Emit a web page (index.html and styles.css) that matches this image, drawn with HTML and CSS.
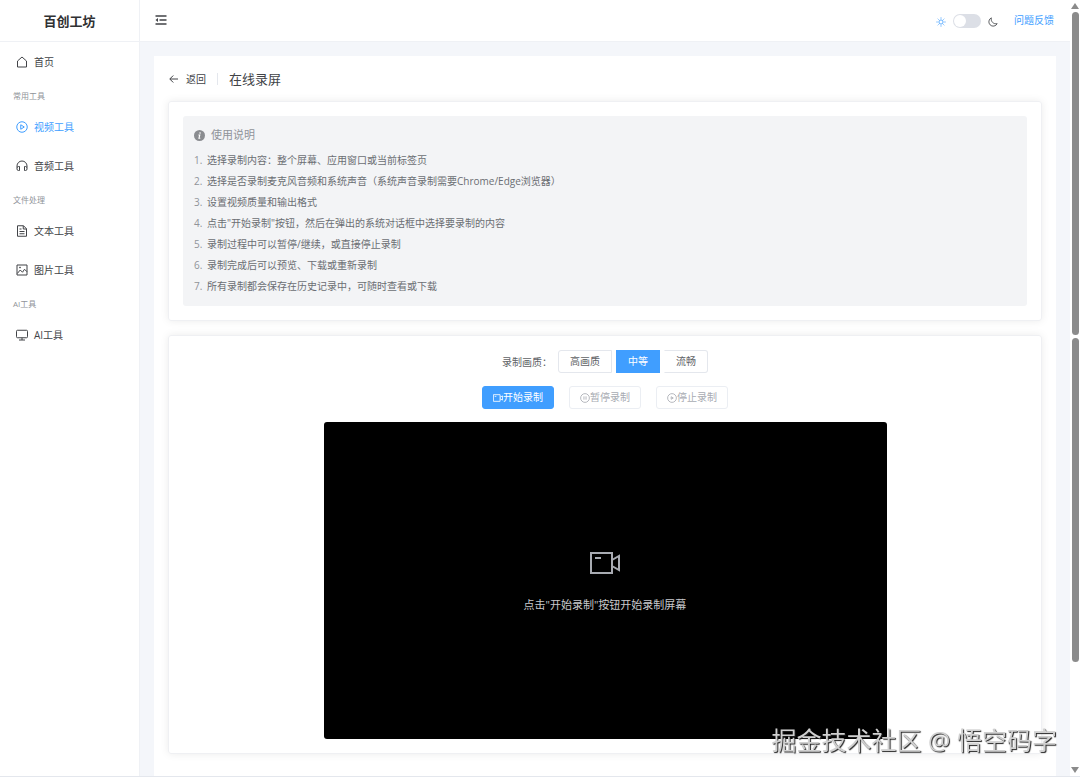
FILE: index.html
```
<!DOCTYPE html>
<html lang="zh-CN">
<head>
  <meta charset="UTF-8">
  <title>在线录屏 - 百创工坊</title>
  <meta name="viewport" content="width=device-width,initial-scale=1">
  <link rel="stylesheet" href="styles.css">
</head>
<body>
  <aside class="sidebar">
    <h1 class="logo">百创工坊</h1>
    <nav class="menu">
      <a class="menu-item" href="#">
        <svg class="icon" viewBox="0 0 24 24"><path d="M3 22V10l9-8 9 8v12z"/></svg>
        首页
      </a>
      <div class="menu-group">常用工具</div>
      <a class="menu-item active" href="#">
        <svg class="icon" viewBox="0 0 24 24"><circle cx="12" cy="12" r="10.5"/><path d="M9.500 7.500v9l7-4.500z"/></svg>
        视频工具
      </a>
      <a class="menu-item" href="#">
        <svg class="icon" viewBox="0 0 24 24"><path d="M2 15v-3a10 10 0 0 1 20 0v3M7 13v8H5a3 3 0 0 1-3-3v-2a3 3 0 0 1 3-3zM17 13v8h2a3 3 0 0 0 3-3v-2a3 3 0 0 0-3-3z"/></svg>
        音频工具
      </a>
      <div class="menu-group">文件处理</div>
      <a class="menu-item" href="#">
        <svg class="icon" viewBox="0 0 24 24"><path d="M3 1.500h12l6 6v15H3zM14.500 1.500V8H21M7 8h4M7 13h10M7 17.500h10"/></svg>
        文本工具
      </a>
      <a class="menu-item" href="#">
        <svg class="icon" viewBox="0 0 24 24"><path d="M2 2h20v20H2zM2.500 19l6-7 4.500 4.500 4-6 5 5"/><circle cx="8" cy="7" r="1"/></svg>
        图片工具
      </a>
      <div class="menu-group">AI工具</div>
      <a class="menu-item" href="#">
        <svg class="icon" viewBox="0 0 24 24"><rect x="1" y="2.500" width="22" height="15" rx="2"/><path d="M12 17.500V22M6 22h12"/></svg>
        AI工具
      </a>
    </nav>
  </aside>

  <div class="container">
    <header class="topbar">
      <button class="icon-btn" type="button" aria-label="折叠菜单">
        <svg class="icon" viewBox="0 0 24 24"><path class="bold" d="M1 4h22M9 12h14M1 20h22"/><path class="solid" d="M1 12l5-4v8z"/></svg>
      </button>
      <div class="topbar-right">
        <label class="theme">
          <svg class="icon sun" viewBox="0 0 24 24"><circle cx="12" cy="12" r="5"/><path d="M12 1v3M12 20v3M1 12h3M20 12h3M4.200 4.200l2 2M17.800 17.800l2 2M4.200 19.800l2-2M17.800 6.200l2-2"/></svg>
          <input class="switch" type="checkbox" aria-label="深色模式">
          <svg class="icon moon" viewBox="0 0 24 24"><path d="M8 2a10.500 10.500 0 1 0 14 14A11.500 11.500 0 0 1 8 2z"/></svg>
        </label>
        <a class="feedback" href="#">问题反馈</a>
      </div>
    </header>

    <main class="main">
      <section class="panel">
        <div class="page-header">
          <a class="back" href="#">
            <svg class="icon" viewBox="0 0 24 24"><path d="M20 12H4M10.500 5L3.500 12l7 7"/></svg>
            返回
          </a>
          <h2 class="page-title">在线录屏</h2>
        </div>

        <div class="card">
          <div class="tips">
            <div class="tips-title">
              <svg class="info" viewBox="0 0 20 20"><circle cx="10" cy="10" r="10"/><circle class="mark" cx="11" cy="5.500" r="1.500"/><path class="stem" d="M8 9h2.500l-1.500 6h2.500"/></svg>
              使用说明
            </div>
            <ol class="tips-list">
              <li>选择录制内容：整个屏幕、应用窗口或当前标签页</li>
              <li>选择是否录制麦克风音频和系统声音（系统声音录制需要Chrome/Edge浏览器）</li>
              <li>设置视频质量和输出格式</li>
              <li>点击"开始录制"按钮，然后在弹出的系统对话框中选择要录制的内容</li>
              <li>录制过程中可以暂停/继续，或直接停止录制</li>
              <li>录制完成后可以预览、下载或重新录制</li>
              <li>所有录制都会保存在历史记录中，可随时查看或下载</li>
            </ol>
          </div>
        </div>

        <div class="card recorder">
          <div class="quality" role="radiogroup" aria-labelledby="qualityLabel">
            <span class="quality-label" id="qualityLabel">录制画质：</span>
            <div class="radios">
              <label class="radio"><input type="radio" name="quality" value="high">高画质</label>
              <label class="radio"><input type="radio" name="quality" value="medium" checked>中等</label>
              <label class="radio"><input type="radio" name="quality" value="low">流畅</label>
            </div>
          </div>
          <div class="actions">
            <button class="btn primary" type="button">
              <svg class="icon" viewBox="0 0 24 24"><path d="M1 4h16v16H1zM17 10l6-3v10l-6-3M4 8h4"/></svg>开始录制
            </button>
            <button class="btn" type="button" disabled>
              <svg class="icon" viewBox="0 0 24 24"><circle cx="12" cy="12" r="10.500"/><path d="M9.500 8v8M14.500 8v8"/></svg>暂停录制
            </button>
            <button class="btn" type="button" disabled>
              <svg class="icon" viewBox="0 0 24 24"><circle cx="12" cy="12" r="10.500"/><path d="M10 9v6l5-3z"/></svg>停止录制
            </button>
          </div>
          <div class="preview">
            <svg class="camera" viewBox="0 0 32 32"><path d="M2 6h21v20H2zM23 13l7-4v14l-7-4M6 11h6"/></svg>
            <p>点击"开始录制"按钮开始录制屏幕</p>
          </div>
        </div>
      </section>
    </main>
  </div>

  <div class="scrollbar" aria-hidden="true">
    <svg class="arrow" viewBox="0 0 8 6"><path d="M4 0l4 6H0z"/></svg>
    <span class="thumb"></span>
    <span class="thumb"></span>
    <svg class="arrow down" viewBox="0 0 8 6"><path d="M0 0h8L4 6z"/></svg>
  </div>

  <div class="watermark">掘金技术社区 @ 悟空码字</div>
</body>
</html>
```
FILE: styles.css
```
* { box-sizing:border-box; margin:0; padding:0; }
html, body { height:100%; }
body {
  display:flex; background:#fff; color:#414347; font-size:10px; line-height:16px;
  border-bottom:1px solid #e4e7ed;
  font-family:"Open Sans","Noto Sans CJK SC",sans-serif;
}
a { color:inherit; text-decoration:none; }
button, input { font:inherit; }
.icon { width:12px; height:12px; flex:none; fill:none; stroke:currentColor; stroke-width:2; }
.icon .bold { stroke-width:3; }
.icon .solid { fill:currentColor; stroke:none; }

/* sidebar */
.sidebar { width:140px; flex:none; border-right:1px solid #eff1f5; }
.logo { height:42px; line-height:42px; border-bottom:1px solid #eff1f5; text-align:center; font-size:13px; font-weight:700; color:#303133; }
.menu-item { display:flex; align-items:center; gap:6px; height:39px; padding:0 16px; }
.menu-item.active { color:#409eff; }
.menu-group { height:26px; padding:7px 13px 0; font-size:8px; color:#909399; }

/* top bar */
.container { flex:1; min-width:0; display:flex; flex-direction:column; }
.topbar { display:flex; align-items:center; justify-content:space-between; height:42px; flex:none; padding:0 16px 2px 15px; border-bottom:1px solid #eff1f5; }
.icon-btn { display:flex; border:0; background:none; color:#414347; cursor:pointer; }
.topbar-right, .theme { display:flex; align-items:center; }
.topbar-right { gap:16px; }
.theme { gap:7px; padding-top:2px; }
.theme .icon { width:10px; height:10px; margin-top:2px; }
.theme .sun { color:#409eff; }
.switch { appearance:none; display:flex; align-items:center; width:28px; height:14px; padding:1px; border-radius:7px; background:#dcdfe6; cursor:pointer; }
.switch::before { content:""; width:12px; height:12px; border-radius:50%; background:#fff; }
.switch:checked { justify-content:flex-end; background:#409eff; }
.feedback { color:#409eff; }

/* page */
.main { flex:1; display:flex; padding:14px 14px 0; background:#f4f6fa; }
.panel { flex:1; min-width:0; padding:14px; background:#fff; }
.page-header { display:flex; align-items:center; height:18px; margin-bottom:13px; }
.back { display:flex; align-items:center; gap:6px; padding-right:11px; border-right:1px solid #e4e7ed; line-height:12px; }
.page-title { padding-left:11px; font-size:13px; font-weight:400; line-height:18px; }
.card { margin-bottom:14px; padding:14px; border:1px solid #eff0f3; border-radius:3px; box-shadow:0 0 8px rgba(0,0,0,.08); }

.tips { padding:11px 11px 9px; border-radius:3px; background:#f3f4f6; color:#909399; }
.tips-title { display:flex; align-items:center; gap:6px; margin-bottom:7px; font-size:11px; }
.info { width:11px; height:11px; fill:#8a8c90; }
.info .mark { fill:#fff; }
.info .stem { fill:none; stroke:#fff; stroke-width:2; }
.tips-list { padding-left:13px; line-height:21px; color:#6b6e73; }
.tips-list li { list-style:none; counter-increment:tip; }
.tips-list li::before { content:counter(tip) "."; display:inline-block; width:13px; margin-left:-13px; color:#909399; }

/* recorder */
.recorder { display:flex; flex-direction:column; align-items:center; gap:13px; margin-bottom:0; }
.quality { display:flex; align-items:center; gap:6px; color:#606266; }
.radios { display:flex; gap:4px; }
.radio { height:23px; padding:0 11px; border:1px solid #e4e7ed; line-height:21px; color:#606266; cursor:pointer; }
.radio:first-child { border-radius:3px 0 0 3px; }
.radio:last-child { border-left-color:transparent; border-radius:0 3px 3px 0; }
.radio input { position:absolute; opacity:0; }
.radio:has(:checked) { border-color:#409eff; background:#409eff; color:#fff; }
.actions { display:flex; gap:15px; }
.btn { display:flex; align-items:center; height:23px; padding:0 10px; border:1px solid #ebeef3; border-radius:3px; background:#fff; color:#a8abb2; line-height:21px; cursor:pointer; }
.btn .icon { width:10px; height:10px; }
.btn.primary { border-color:#409eff; background:#409eff; color:#fff; }
.btn:disabled { cursor:not-allowed; }
.preview { display:flex; flex-direction:column; align-items:center; justify-content:center; gap:18px; width:100%; max-width:563px; aspect-ratio:16/9; border-radius:3px; background:#000; color:#c8c9cc; font-size:11px; }
.camera { width:32px; height:32px; fill:none; stroke:#a8abb2; stroke-width:2; }

/* scrollbar */
.scrollbar { display:flex; flex-direction:column; align-items:center; gap:3px; width:10px; flex:none; padding:3px 0; }
.arrow { width:8px; height:6px; flex:none; fill:#8b8b8b; }
.arrow.down { margin-top:auto; }
.thumb { width:7px; flex:0 0 42%; border-radius:4px; background:#8b8b8b; }

.watermark { position:fixed; right:23px; bottom:20px; font-size:25px; line-height:34px; color:#d0d0d0; text-shadow:1px 1px 1px #222; }
```
